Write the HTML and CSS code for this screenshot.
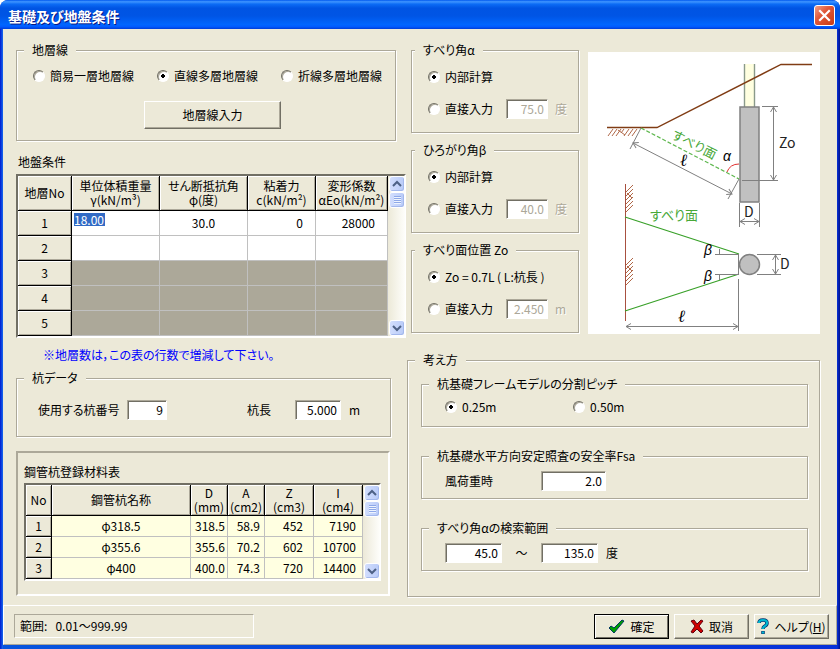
FILE: index.html
```html
<!DOCTYPE html>
<html lang="ja">
<head>
<meta charset="UTF-8">
<title>基礎及び地盤条件</title>
<meta name="viewport" content="width=device-width, initial-scale=1.0">

<link rel="stylesheet" href="styles.css">
</head>
<body>

	<form action="#" id="groundForm" class="window">

		<header class="titlebar">
			<h1>基礎及び地盤条件</h1>
			<button type="button" class="close" aria-label="閉じる">
				<svg width="13" height="13" viewBox="0 0 13 13"><path d="M2 2 L11 11 M11 2 L2 11" stroke="#fff" stroke-width="2.2" stroke-linecap="square"/></svg>
			</button>
		</header>

		<main class="main">

			<!-- 左側 -->
			<div class="left">
				<fieldset class="group line-group">
					<legend>地層線</legend>
					<div class="row line-row">
						<label><input type="radio" name="line" value="1">簡易一層地層線</label>
						<label><input type="radio" name="line" value="2" checked>直線多層地層線</label>
						<label><input type="radio" name="line" value="3">折線多層地層線</label>
					</div>
					<button type="button" class="btn line-btn">地層線入力</button>
				</fieldset>

				<h2 class="caption ground-caption">地盤条件</h2>
				<div class="grid-frame">
					<table class="grid ground">
						<colgroup>
							<col class="c-no"><col class="c-gamma"><col class="c-phi"><col class="c-c"><col class="c-eo">
						</colgroup>
						<thead>
							<tr>
								<th>地層No</th>
								<th>単位体積重量<br>γ(kN/m³)</th>
								<th>せん断抵抗角<br>φ(度)</th>
								<th>粘着力<br>c(kN/m²)</th>
								<th>変形係数<br>αEo(kN/m²)</th>
							</tr>
						</thead>
						<tbody>
							<tr><th>1</th><td class="editing"><input type="text" class="cell-edit" value="18.00" aria-label="単位体積重量"></td><td class="center">30.0</td><td class="num">0</td><td class="num">28000</td></tr>
							<tr><th>2</th><td></td><td></td><td></td><td></td></tr>
							<tr class="off"><th>3</th><td></td><td></td><td></td><td></td></tr>
							<tr class="off"><th>4</th><td></td><td></td><td></td><td></td></tr>
							<tr class="off"><th>5</th><td></td><td></td><td></td><td></td></tr>
						</tbody>
					</table>
					<div class="scroll">
						<button type="button" aria-label="上へ"><svg width="10" height="8" viewBox="0 0 10 8"><path d="M1 6 L5 2 L9 6"/></svg></button>
						<span class="thumb"></span>
						<button type="button" class="down" aria-label="下へ"><svg width="10" height="8" viewBox="0 0 10 8"><path d="M1 2 L5 6 L9 2"/></svg></button>
					</div>
				</div>
				<p class="note">※地層数は，この表の行数で増減して下さい。</p>

				<fieldset class="group pile-group">
					<legend>杭データ</legend>
					<div class="row pile-row">
						<label for="pileNo" class="pile-no">使用する杭番号</label>
						<input type="text" id="pileNo" class="w40" value="9">
						<label for="pileLen" class="pile-len">杭長</label>
						<input type="text" id="pileLen" class="w46" value="5.000">
						<span class="unit">m</span>
					</div>
				</fieldset>

				<section class="panel">
					<h2 class="caption">鋼管杭登録材料表</h2>
					<div class="grid-frame">
						<table class="grid steel">
							<colgroup>
								<col class="s-no"><col class="s-name"><col class="s-d"><col class="s-a"><col class="s-z"><col class="s-i">
							</colgroup>
							<thead>
								<tr>
									<th>No</th>
									<th>鋼管杭名称</th>
									<th>D<br>(mm)</th>
									<th>A<br>(cm2)</th>
									<th>Z<br>(cm3)</th>
									<th>I<br>(cm4)</th>
								</tr>
							</thead>
							<tbody>
								<tr><th>1</th><td class="center">φ318.5</td><td>318.5</td><td>58.9</td><td class="wide">452</td><td>7190</td></tr>
								<tr><th>2</th><td class="center">φ355.6</td><td>355.6</td><td>70.2</td><td class="wide">602</td><td>10700</td></tr>
								<tr><th>3</th><td class="center">φ400</td><td>400.0</td><td>74.3</td><td class="wide">720</td><td>14400</td></tr>
							</tbody>
						</table>
						<div class="scroll">
							<button type="button" aria-label="上へ"><svg width="10" height="8" viewBox="0 0 10 8"><path d="M1 6 L5 2 L9 6"/></svg></button>
							<span class="thumb"></span>
							<button type="button" class="down" aria-label="下へ"><svg width="10" height="8" viewBox="0 0 10 8"><path d="M1 2 L5 6 L9 2"/></svg></button>
						</div>
					</div>
				</section>
			</div>

			<!-- 右側 -->
			<div class="right">
				<div class="angles">
					<div class="angle-list">
						<fieldset class="group angle">
							<legend>すべり角α</legend>
							<label><input type="radio" name="alpha" value="auto" checked>内部計算</label>
							<div class="row direct">
								<label><input type="radio" name="alpha" value="direct">直接入力</label>
								<input type="text" class="w42" value="75.0" aria-label="すべり角" disabled>
								<span class="unit off">度</span>
							</div>
						</fieldset>
						<fieldset class="group angle">
							<legend>ひろがり角β</legend>
							<label><input type="radio" name="beta" value="auto" checked>内部計算</label>
							<div class="row direct">
								<label><input type="radio" name="beta" value="direct">直接入力</label>
								<input type="text" class="w42" value="40.0" aria-label="ひろがり角" disabled>
								<span class="unit off">度</span>
							</div>
						</fieldset>
						<fieldset class="group angle">
							<legend>すべり面位置 Zo</legend>
							<label><input type="radio" name="zo" value="auto" checked>Zo = 0.7L ( L:杭長 )</label>
							<div class="row direct">
								<label><input type="radio" name="zo" value="direct">直接入力</label>
								<input type="text" class="w42" value="2.450" aria-label="すべり面位置" disabled>
								<span class="unit off">m</span>
							</div>
						</fieldset>
					</div>

					<svg class="figure" viewBox="0 0 232 282" role="img" aria-label="すべり面の説明図">
						<defs>
							<marker id="arrow" viewBox="0 0 8 8" refX="7" refY="4" markerWidth="8" markerHeight="8" markerUnits="userSpaceOnUse" orient="auto-start-reverse">
								<path d="M2 1 L7 4 L2 7" class="dim"/>
							</marker>
						</defs>
						<!-- 断面図 -->
						<rect x="156" y="12" width="11" height="43" fill="#ffffe0"/>
						<path d="M156.5 12 V55 M166.5 12 V55" stroke="#8a9a8a" stroke-width="1.4" fill="none"/>
						<rect x="152" y="55" width="19" height="95" fill="#c0c0c0" stroke="#808080" stroke-width="1.5"/>
						<path d="M19 75.5 H69 L193 12.5 H224" stroke="#803c14" stroke-width="1.4" fill="none"/>
						<path class="hatch" d="M20 84 L25 77 M24 84 L29 77 M28 84 L33 77 M30 78 L37 83 M33 81 L36 77 M36 84 L41 77 M40 84 L45 77 M44 84 L49 77"/>
						<path class="slip light" d="M53 76 L151 127" stroke-dasharray="4 2"/>
						<text class="slip-text" x="83" y="86" transform="rotate(27 83 86)">すべり面</text>
						<path class="dim" d="M53 76 L42 97 M151 127 L140 147"/>
						<path class="dim" d="M45 91 L144 142" marker-start="url(#arrow)" marker-end="url(#arrow)"/>
						<text class="ell" x="92" y="114">ℓ</text>
						<text class="greek" x="135" y="109">α</text>
						<path d="M151 112 Q142 112 139 120" stroke="#e03030" fill="none"/>
						<path class="dim" d="M174 54.5 H190 M154 128.5 H190"/>
						<path class="dim" d="M185.5 55 V128" marker-start="url(#arrow)" marker-end="url(#arrow)"/>
						<text class="sym" x="191" y="96">Zo</text>
						<path class="dim" d="M151.5 151 V175 M171.5 151 V175"/>
						<path class="dim" d="M152 169.5 H171" marker-start="url(#arrow)" marker-end="url(#arrow)"/>
						<text class="sym" x="156" y="165">D</text>
						<!-- 平面図 -->
						<path d="M37.5 132 V269" stroke="#a85040" fill="none"/>
						<path class="hatch" d="M38 140 L45 133 M38 144 L45 137 M38 148 L45 141 M39 141 L44 146 M38 152 L45 145 M38 156 L45 149 M38 160 L45 153"/>
						<path class="hatch" d="M38 213 L45 206 M38 217 L45 210 M38 221 L45 214 M39 214 L44 219 M38 225 L45 218 M38 229 L45 222 M38 233 L45 226"/>
						<path class="slip" d="M37 165 L151 202 M37 259 L151 222"/>
						<text class="slip-text" x="62" y="168">すべり面</text>
						<text class="greek" x="116" y="203">β</text>
						<text class="greek" x="116" y="229">β</text>
						<path class="dim" d="M127 202.5 H151 M131.5 197 V202 M127 222.5 H151 M131.5 222 V228 M150.5 202 V222 M150.5 227 V279"/>
						<circle cx="161.5" cy="212.5" r="10" fill="#c0c0c0" stroke="#808080" stroke-width="1.5"/>
						<path class="dim" d="M169 202.5 H193 M169 222.5 H193"/>
						<path class="dim" d="M187.5 203 V222" marker-start="url(#arrow)" marker-end="url(#arrow)"/>
						<text class="sym" x="192" y="217">D</text>
						<path class="dim" d="M38 274.5 H150" marker-start="url(#arrow)" marker-end="url(#arrow)"/>
						<text class="ell" x="90" y="270">ℓ</text>
					</svg>
				</div>

				<fieldset class="group policy">
					<legend>考え方</legend>
					<fieldset class="group">
						<legend>杭基礎フレームモデルの分割ピッチ</legend>
						<div class="row pitch-row">
							<label><input type="radio" name="pitch" value="0.25" checked>0.25m</label>
							<label><input type="radio" name="pitch" value="0.50">0.50m</label>
						</div>
					</fieldset>
					<fieldset class="group">
						<legend>杭基礎水平方向安定照査の安全率Fsa</legend>
						<div class="row">
							<label for="fsa" class="fsa">風荷重時</label>
							<input type="text" id="fsa" class="w65" value="2.0">
						</div>
					</fieldset>
					<fieldset class="group">
						<legend>すべり角αの検索範囲</legend>
						<div class="row">
							<input type="text" class="w57" value="45.0" aria-label="下限">
							<span class="tilde">～</span>
							<input type="text" class="w57" value="135.0" aria-label="上限">
							<span class="unit">度</span>
						</div>
					</fieldset>
				</fieldset>
			</div>
		</main>

		<footer class="footer">
			<p class="status">範囲:&nbsp;&nbsp; 0.01～999.99</p>
			<div class="buttons">
				<button type="submit" class="btn default">
					<svg width="17" height="15" viewBox="0 0 17 15"><path d="M1 9 L3 7 L6 9 L14 1 L16 2 L6 14 Z" fill="#00a000" stroke="#003860"/></svg>
					確定
				</button>
				<button type="button" class="btn">
					<svg width="14" height="15" viewBox="0 0 14 15"><path d="M1 2 L4 1 L7 5 L11 1 L13 2 L9 7 L13 12 L11 14 L7 10 L3 14 L1 13 L5 7 Z" fill="#d00000" stroke="#600010"/></svg>
					取消
				</button>
				<button type="button" class="btn">
					<svg width="12" height="17" viewBox="0 0 12 17"><path d="M2 5 Q2 2 6 2 Q10 2 10 5 Q10 7 8 8 Q6 9 6 11 M6 13 V16" stroke="#003070" stroke-width="3.5" fill="none"/><path d="M2 5 Q2 2 6 2 Q10 2 10 5 Q10 7 8 8 Q6 9 6 11 M6 13.5 V15.5" stroke="#00b8d0" stroke-width="2.2" fill="none"/></svg>
					<span>ヘルプ(<u>H</u>)</span>
				</button>
			</div>
		</footer>
	</form>

</body>
</html>
```
FILE: styles.css
```css
* {
	box-sizing: border-box;
}

body {
	margin: 0;
	background-color: #fff;
	color: #000;
	font: 12px/14px "Noto Sans CJK JP", sans-serif;
	font-feature-settings: "palt";
}

h1, h2, p {
	margin: 0;
	font-size: 12px;
	font-weight: normal;
}

button, input {
	margin: 0;
	font: inherit;
	font-feature-settings: inherit;
	color: #000;
}

/* ウィンドウ枠 */
.window {
	display: flex;
	flex-direction: column;
	min-height: 100vh;
	padding: 0 3px 4px;
	background-color: #0831d9;
	background-image: linear-gradient(to right, #0019cf, #166aee 3px, #0855dd 3px, #0831d9 calc(100% - 3px), #00138c);
	border-radius: 8px 8px 0 0;
}

.titlebar {
	display: flex;
	justify-content: space-between;
	align-items: center;
	height: 29px;
	margin: 0 -3px;
	padding: 2px 5px 0 8px;
	border-radius: 8px 8px 0 0;
	background: linear-gradient(to bottom, #0058ee 0, #3f95ff 6%, #0c6cf5 14%, #0054e3 28%, #0055e5 55%, #0066ff 85%, #005bff 92%, #003dd7 100%);
}

.titlebar h1 {
	color: #fff;
	font-size: 14px;
	font-weight: bold;
	text-shadow: 1px 1px 0 #0a1883;
}

.close {
	display: flex;
	justify-content: center;
	align-items: center;
	width: 21px;
	height: 21px;
	padding: 0;
	border: 1px solid #fff;
	border-radius: 3px;
	background: linear-gradient(135deg, #f0a088, #e0583a 40%, #c83a14);
}

.main {
	display: grid;
	grid-template-columns: minmax(0, 390fr) minmax(0, 413fr);
	gap: 1px;
	flex: 1;
	padding: 14px 17px 8px 13px;
	background-color: #ece9d8;
}

/* 共通部品 */
.group {
	min-width: 0;
	margin: 0;
	padding: 8px 16px 0;
	border: 1px solid #aca899;
	box-shadow: 1px 1px 0 #fff, inset 1px 1px 0 #fff;
}

.group > legend {
	margin-left: -9px;
	padding: 0 8px;
	background-color: #ece9d8;
}

.row {
	display: flex;
	align-items: center;
}

label {
	display: flex;
	align-items: center;
	gap: 5px;
	height: 16px;
	white-space: nowrap;
}

input[type="radio"] {
	appearance: none;
	flex: none;
	width: 12px;
	height: 12px;
	border: 1px solid;
	border-color: #716f64 #fff #fff #716f64;
	border-radius: 50%;
	background-color: #fff;
	box-shadow: inset 1px 1px 0 #aca899;
}

input[type="radio"]:checked {
	background-image: radial-gradient(circle, #000 2px, transparent 2px);
}

input[type="text"] {
	height: 20px;
	padding: 0 3px 2px;
	border: 1px solid;
	border-color: #aca899 #fff #fff #aca899;
	border-radius: 0;
	background-color: #fff;
	box-shadow: inset 1px 1px 0 #716f64;
	text-align: right;
}

input[type="text"]:disabled {
	color: #aca899;
}

.w40 { width: 40px; }
.w42 { width: 42px; }
.w46 { width: 46px; }
.w57 { width: 57px; }
.w65 { width: 65px; }

.unit {
	margin-left: 8px;
}

.unit.off {
	color: #aca899;
	text-shadow: 1px 1px 0 #fff;
}

.btn {
	display: flex;
	justify-content: center;
	align-items: center;
	gap: 5px;
	padding: 0;
	border: 1px solid;
	border-color: #fff #716f64 #716f64 #fff;
	background-color: #ece9d8;
	box-shadow: inset -1px -1px 0 #aca899;
	white-space: nowrap;
}

/* 地層線 */
.line-group {
	margin-right: 10px;
	padding: 11px 13px 11px 16px;
}

.line-row {
	justify-content: space-between;
}

.line-btn {
	width: 137px;
	height: 28px;
	margin: 17px auto 0 111px;
}

/* 表 */
.ground-caption {
	margin: 14px 0 5px 2px;
}

.grid-frame {
	display: flex;
	border: 2px solid;
	border-color: #716f64 #fff #fff #716f64;
}

.grid {
	flex: 1;
	table-layout: fixed;
	width: 100%;
	border-collapse: separate;
	border-spacing: 0;
	line-height: 14px;
}

.grid th {
	padding: 0;
	border: solid #000;
	border-width: 0 1px 1px 0;
	background-color: #ece9d8;
	box-shadow: inset 1px 1px 0 #fff, inset -1px -1px 0 #aca899;
	font-weight: normal;
	white-space: nowrap;
}

.grid td {
	padding: 0 4px;
	border: solid #c0c0c0;
	border-width: 0 1px 1px 0;
	background-color: #fff;
	text-align: right;
}

.grid .center {
	text-align: center;
}

.ground thead tr {
	height: 35px;
}

.ground tbody tr {
	height: 25px;
}

.ground .off td {
	background-color: #aca899;
}

.ground .num {
	padding-right: 12px;
}

.ground .editing {
	padding: 2px;
	text-align: left;
	vertical-align: top;
}

.ground .cell-edit {
	display: block;
	width: 31px;
	height: 13px;
	padding: 0;
	border: 0;
	background-color: #316ac5;
	box-shadow: none;
	color: #fff;
	line-height: 13px;
	text-align: left;
}

.c-no { width: 54px; }
.c-phi, .c-gamma { width: 88px; }
.c-c { width: 68px; }
.c-eo { width: 72px; }

.scroll {
	display: flex;
	flex-direction: column;
	flex: none;
	width: 17px;
	padding-left: 1px;
	background: linear-gradient(to right, #ece9d8, #fefefb);
}

.scroll button, .thumb {
	display: flex;
	justify-content: center;
	align-items: center;
	height: 16px;
	padding: 0;
	border: 1px solid #fff;
	border-radius: 3px;
	background: linear-gradient(to right, #d2defd, #b9cbf8);
	box-shadow: inset -1px -1px 0 #a3b8ec;
}

.scroll path {
	fill: none;
	stroke: #4d6185;
	stroke-width: 2;
}

.scroll .down {
	margin-top: auto;
}

.thumb::before {
	content: "";
	width: 7px;
	height: 8px;
	background: repeating-linear-gradient(to bottom, #8ea8e8 0, #8ea8e8 1px, #eef4fe 1px, #eef4fe 2px);
}

.note {
	margin: 10px 0 9px 27px;
	color: #0000ff;
}

/* 杭データ */
.pile-group {
	margin-right: 15px;
	padding: 15px 16px 16px 21px;
}

.pile-group > legend {
	margin-left: -14px;
}

.pile-no {
	width: 89px;
}

.pile-len {
	width: 48px;
	margin-left: 80px;
}

/* 鋼管杭 */
.panel {
	margin: 14px 16px 0 0;
	padding: 12px 7px 13px 6px;
	border: 2px solid;
	border-color: #aca899 #fff #fff #aca899;
}

.panel .caption {
	margin-bottom: 4px;
}

.steel thead tr {
	height: 31px;
}

.steel tbody tr {
	height: 21px;
}

.steel td {
	background-color: #ffffe1;
}

.steel .wide {
	padding-right: 10px;
}

.steel td:last-child {
	padding-right: 6px;
}

.s-no { width: 26px; }
.s-name { width: 139px; }
.s-d, .s-a { width: 37px; }
.s-z, .s-i { width: 49px; }

/* すべり角・ひろがり角 */
.angles {
	display: grid;
	grid-template-columns: minmax(0, 168fr) minmax(0, 232fr);
	gap: 9px;
	padding-left: 4px;
}

.angle-list {
	display: flex;
	flex-direction: column;
	gap: 10px;
}

.angle {
	padding: 12px 8px 13px 16px;
}

.angle > legend {
	margin-left: -13px;
}

.direct {
	gap: 7px;
	margin-top: 14px;
}

.direct input[type="text"] {
	margin-left: 6px;
}

.direct .unit {
	margin-left: 0;
}

.figure {
	width: 100%;
	margin-top: 9px;
	background-color: #fff;
	font-family: "Noto Sans CJK JP", sans-serif;
}

.figure .dim {
	fill: none;
	stroke: #808080;
}

.figure .hatch {
	fill: none;
	stroke: #b06848;
}

.figure .slip {
	fill: none;
	stroke: #38a028;
	stroke-width: 1.2;
}

.figure .light {
	stroke: #60b850;
}

.slip-text {
	fill: #48a838;
	font-size: 13px;
}

.greek {
	font: italic 14px "Liberation Sans", sans-serif;
}

.sym {
	font-size: 14px;
	fill: #222;
}

.ell {
	font: italic 17px "DejaVu Serif", serif;
}

/* 考え方 */
.policy {
	display: flex;
	flex-direction: column;
	gap: 22px;
	margin-top: 19px;
	padding: 10px 11px 25px 13px;
}

.policy > legend {
	margin-left: -6px;
}

.policy .group {
	min-height: 50px;
	padding-left: 23px;
}

.policy .group > legend {
	margin-left: -16px;
}

.pitch-row label {
	width: 128px;
}

.fsa {
	width: 96px;
}

.tilde {
	width: 39px;
	text-align: center;
}

/* フッター */
.footer {
	display: flex;
	justify-content: space-between;
	padding: 8px 7px 5px 10px;
	border: 1px solid;
	border-color: #fff #aca899 #aca899 #fff;
	background-color: #ece9d8;
}

.status {
	width: 240px;
	height: 24px;
	padding: 4px 5px;
	border: 1px solid;
	border-color: #aca899 #fff #fff #aca899;
}

.buttons {
	display: flex;
	gap: 5px;
}

.buttons .btn {
	width: 75px;
	height: 25px;
}

.buttons .default {
	outline: 1px solid #000;
	outline-offset: -1px;
	border-color: #000;
	box-shadow: inset 1px 1px 0 #fff, inset -1px -1px 0 #716f64;
}
```
